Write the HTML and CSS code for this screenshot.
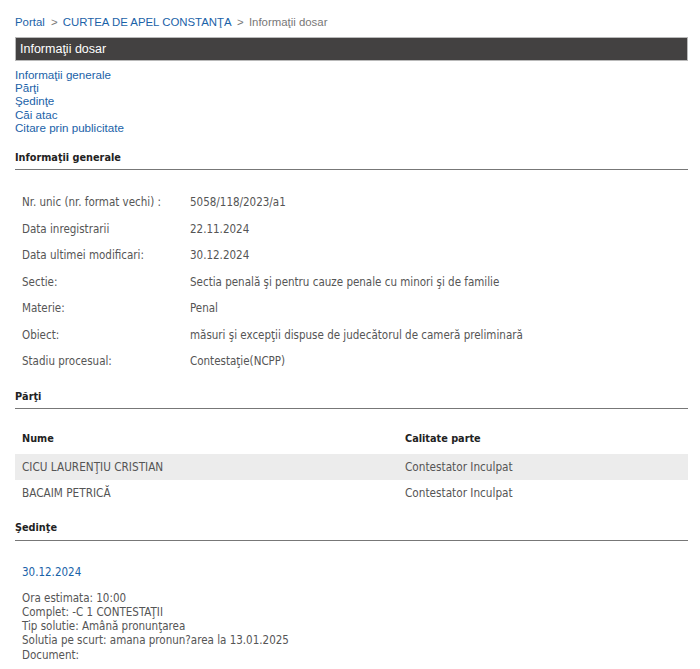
FILE: index.html
```html
<!DOCTYPE html>
<html lang="ro">
<head>
    <meta charset="UTF-8">
    <meta name="viewport" content="width=device-width, initial-scale=1.0">
    <title>Informații dosar</title>
    <link rel="stylesheet" href="styles.css">
</head>
<body>
    <div class="page">
        <!-- breadcrumb -->
        <div class="crumbs">
            <a href="#">Portal</a> <span class="sep">&gt;</span> <a href="#">CURTEA DE APEL CONSTANŢA</a> <span class="sep">&gt;</span> <span class="cur">Informaţii dosar</span>
        </div>

        <div class="titlebar">Informaţii dosar</div>

        <div class="anchors">
            <a href="#gen">Informaţii generale</a>
            <a href="#parti">Părţi</a>
            <a href="#sedinte">Şedinţe</a>
            <a href="#cai">Căi atac</a>
            <a href="#citare">Citare prin publicitate</a>
        </div>

        <!-- informatii generale -->
        <h2 class="sect sect-gen" id="gen">Informaţii generale</h2>
        <div class="info">
            <div class="row"><span class="lbl">Nr. unic (nr. format vechi) :</span><span class="val">5058/118/2023/a1</span></div>
            <div class="row"><span class="lbl">Data inregistrarii</span><span class="val">22.11.2024</span></div>
            <div class="row"><span class="lbl">Data ultimei modificari:</span><span class="val">30.12.2024</span></div>
            <div class="row"><span class="lbl">Sectie:</span><span class="val">Sectia penală şi pentru cauze penale cu minori şi de familie</span></div>
            <div class="row"><span class="lbl">Materie:</span><span class="val">Penal</span></div>
            <div class="row"><span class="lbl">Obiect:</span><span class="val">măsuri şi excepţii dispuse de judecătorul de cameră preliminară</span></div>
            <div class="row"><span class="lbl">Stadiu procesual:</span><span class="val">Contestaţie(NCPP)</span></div>
        </div>

        <!-- parti -->
        <h2 class="sect" id="parti">Părţi</h2>
        <table class="parti">
            <tr><th>Nume</th><th>Calitate parte</th></tr>
            <tr class="odd"><td>CICU LAURENŢIU CRISTIAN</td><td>Contestator Inculpat</td></tr>
            <tr><td>BACAIM PETRICĂ</td><td>Contestator Inculpat</td></tr>
        </table>

        <!-- sedinte -->
        <h2 class="sect sect-sed" id="sedinte">Şedinţe</h2>
        <div class="sedinta">
            <a class="data" href="#">30.12.2024</a>
            <div class="det">
                Ora estimata: 10:00<br>
                Complet: -C 1 CONTESTAŢII<br>
                Tip solutie: Amână pronunţarea<br>
                Solutia pe scurt: amana pronun?area la 13.01.2025<br>
                Document:
            </div>
        </div>
    </div>
</body>
</html>
```

FILE: styles.css
```css
body{
    margin:0;
    background:#fff;
    font-family:"Liberation Sans", Arial, sans-serif;
}
.page{
    margin:0 12px 0 15px;
    padding-top:15px;
}
a{
    color:#1a62a8;
    text-decoration:none;
}
.crumbs{
    font-size:11.4px;
    line-height:14px;
    color:#777;
}
.crumbs .sep{
    margin:0 2px 0 3px;
}
.titlebar{
    margin-top:8px;
    height:22px;
    line-height:22px;
    background:#434141;
    border:1px solid #b9b9b9;
    color:#fff;
    font-size:12.5px;
    padding-left:4px;
}
.anchors{
    margin-top:7px;
    font-size:11.6px;
    line-height:13.2px;
}
.anchors a{
    display:block;
}
.sect{
    margin:15px 0 0 0;
    font-family:"DejaVu Sans Condensed", "DejaVu Sans", sans-serif;
    font-size:10.8px;
    font-weight:bold;
    color:#222;
    line-height:14px;
    padding-bottom:4px;
    border-bottom:1px solid #777;
}
.sect-gen{
    margin-top:17px;
}
.info{
    padding:19px 0 0 7px;
    font-family:"DejaVu Sans Condensed", "DejaVu Sans", sans-serif;
    font-size:11.5px;
    color:#555;
}
.row{
    display:flex;
    height:26.5px;
    align-items:center;
}
.lbl{
    width:168px;
}
table.parti{
    width:100%;
    border-collapse:collapse;
    margin-top:15px;
    font-family:"DejaVu Sans Condensed", "DejaVu Sans", sans-serif;
    font-size:11.7px;
}
.parti th{
    text-align:left;
    font-weight:bold;
    font-size:10.8px;
    color:#222;
    height:30px;
    padding:0 0 0 7px;
}
.parti td{
    color:#555;
    height:26px;
    padding:0 0 0 7px;
}
.parti th:first-child,
.parti td:first-child{
    width:376px;
}
.parti tr.odd td{
    background:#ececec;
}
.sect-sed{
    margin-top:15px;
    padding-bottom:5px;
}
.sedinta{
    padding:24px 0 0 7px;
    font-family:"DejaVu Sans Condensed", "DejaVu Sans", sans-serif;
    font-size:11.5px;
}
.sedinta .data{
    display:block;
    line-height:14px;
}
.det{
    margin-top:12px;
    color:#555;
    line-height:14.3px;
}
```
